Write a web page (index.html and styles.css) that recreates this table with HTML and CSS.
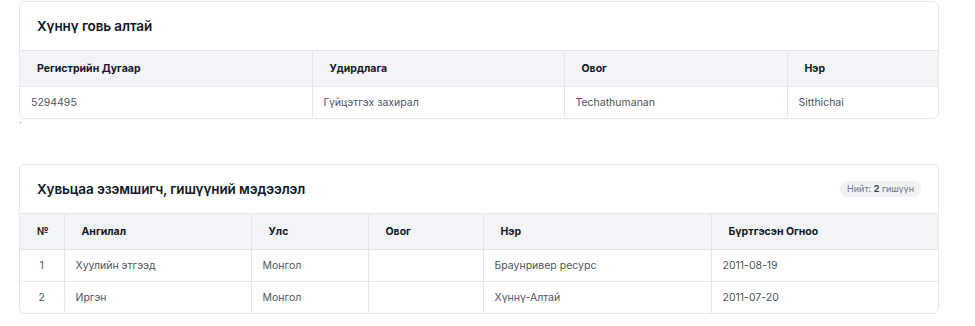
FILE: index.html
```html
<!DOCTYPE html>
<html lang="mn">
<head>
<meta charset="utf-8">
<title>Компанийн мэдээлэл</title>
<link rel="stylesheet" href="styles.css">
</head>
<body>
<div class="page">
  <section class="card">
    <div class="card-head">
      <h2 class="card-title">Хүннү говь алтай</h2>
    </div>
    <table class="tbl">
      <colgroup>
        <col class="c-reg"><col class="c-mgmt"><col class="c-surname"><col class="c-name">
      </colgroup>
      <thead>
        <tr><th>Регистрийн Дугаар</th><th>Удирдлага</th><th>Овог</th><th>Нэр</th></tr>
      </thead>
      <tbody>
        <tr><td>5294495</td><td>Гүйцэтгэх захирал</td><td>Techathumanan</td><td>Sitthichai</td></tr>
      </tbody>
    </table>
  </section>
  <div class="stray">`</div>

  <section class="card card-2">
    <div class="card-head">
      <h2 class="card-title">Хувьцаа эзэмшигч, гишүүний мэдээлэл</h2>
      <span class="badge">Нийт: <b>2</b> гишүүн</span>
    </div>
    <table class="tbl">
      <colgroup>
        <col class="c-no"><col class="c-type"><col class="c-country"><col class="c-surname2"><col class="c-name2"><col class="c-date">
      </colgroup>
      <thead>
        <tr><th class="th-no">№</th><th>Ангилал</th><th>Улс</th><th>Овог</th><th>Нэр</th><th>Бүртгэсэн Огноо</th></tr>
      </thead>
      <tbody>
        <tr><td class="td-no">1</td><td>Хуулийн этгээд</td><td>Монгол</td><td></td><td>Браунривер ресурс</td><td>2011-08-19</td></tr>
        <tr><td class="td-no">2</td><td>Иргэн</td><td>Монгол</td><td></td><td>Хүннү-Алтай</td><td>2011-07-20</td></tr>
      </tbody>
    </table>
  </section>
</div>
</body>
</html>
```

FILE: styles.css
```css
* { box-sizing: border-box; }

html, body {
  margin: 0;
  padding: 0;
  background: #ffffff;
  font-family: Inter, "Noto Sans", "DejaVu Sans", sans-serif;
  color: #111827;
}

.page {
  padding: 1px 0 0 19px;
  width: 939px;
}

.card {
  border: 1px solid #e4e6eb;
  border-radius: 6px;
  overflow: hidden;
  background: #fff;
}

.card-2 {
  margin-top: 30px;
}

.card-head {
  height: 49px;
  display: flex;
  align-items: center;
  justify-content: space-between;
  padding: 0 17px 0 17px;
  border-bottom: 1px solid #e4e6eb;
}

.card-title {
  margin: 0;
  font-size: 13.5px;
  font-weight: 600;
  color: #111827;
  letter-spacing: -0.1px;
}

.badge {
  font-size: 9px;
  color: #6b7280;
  background: #f1f2f6;
  border-radius: 8px;
  padding: 3px 7px;
  line-height: 10px;
}
.badge b {
  color: #374151;
  font-weight: 700;
}

.stray {
  height: 15px;
  padding-top: 3px;
  font-size: 9px;
  line-height: 8px;
  color: #666;
}

.tbl {
  width: 100%;
  border-collapse: collapse;
  table-layout: fixed;
}

.tbl th {
  height: 35px;
  background: #f3f4f7;
  text-align: left;
  font-size: 10.5px;
  font-weight: 700;
  color: #111827;
  padding: 0 0 0 17px;
  border-right: 1px solid #e4e6eb;
}

.tbl td {
  height: 32px;
  font-size: 10.5px;
  font-weight: 400;
  color: #4b5563;
  padding: 0 0 0 11px;
  border-top: 1px solid #e4e6eb;
  border-right: 1px solid #e4e6eb;
}

.tbl th:last-child,
.tbl td:last-child {
  border-right: none;
}

.tbl .td-no {
  text-align: center;
  padding: 0;
}

.c-reg { width: 292px; }
.c-mgmt { width: 252px; }
.c-surname { width: 223px; }
.c-name { width: auto; }

.c-no { width: 44px; }
.c-type { width: 187px; }
.c-country { width: 117px; }
.c-surname2 { width: 115px; }
.c-name2 { width: 228px; }
.c-date { width: auto; }
```
